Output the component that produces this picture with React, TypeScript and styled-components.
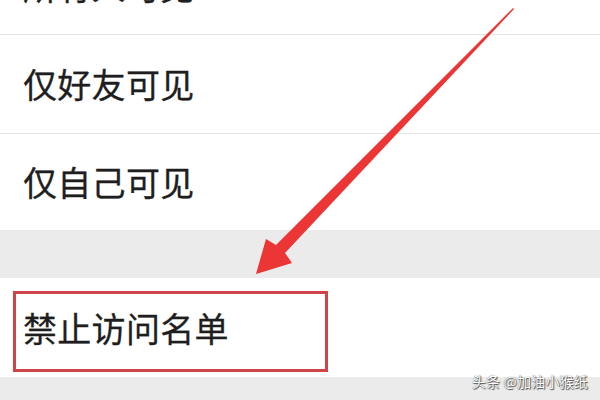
import React from 'react';
import styled, { createGlobalStyle } from 'styled-components';

const GlobalStyle = createGlobalStyle`
  html, body {
    margin: 0;
    padding: 0;
    background: #ffffff;
  }
  * {
    box-sizing: border-box;
  }
`;

const Screen = styled.div`
  position: relative;
  width: 600px;
  height: 400px;
  overflow: hidden;
  background: #ebebeb;
  font-family: "Noto Sans CJK SC", "Noto Sans", sans-serif;
`;

// the first row scrolls partly out of view at the top
const List = styled.div`
  display: flex;
  flex-direction: column;
  margin-top: -62px;
`;

const Row = styled.div<{ $height: number; $divider?: boolean }>`
  position: relative;
  display: flex;
  align-items: center;
  height: ${p => p.$height}px;
  padding-left: 23px;
  background: #ffffff;
  border-bottom: ${p => (p.$divider ? '1px solid #e4e4e4' : 'none')};
`;

const Label = styled.span`
  font-size: 34px;
  line-height: 1;
  color: #1e1e1e;
  letter-spacing: 0.3px;
  -webkit-text-stroke: 0.3px #1e1e1e;
`;

const Gap = styled.div<{ $height: number }>`
  height: ${p => p.$height}px;
  background: #ebebeb;
`;

const Highlight = styled.div`
  position: absolute;
  left: 13px;
  top: 13px;
  width: 315px;
  height: 81px;
  border: 3px solid #cf4446;
`;

const Arrow = styled.svg`
  position: absolute;
  left: 0;
  top: 0;
  width: 600px;
  height: 400px;
  pointer-events: none;
`;

const Watermark = styled.div`
  position: absolute;
  right: 12px;
  bottom: 9px;
  font-size: 14px;
  color: #ffffff;
  letter-spacing: 0.2px;
  text-shadow: 0 0 1px #333, 1px 1px 1px #555;
`;

export default function App() {
  return (
    <>
      <GlobalStyle />
      <Screen>
        <List>
          <Row $height={97} $divider>
            <Label>所有人可见</Label>
          </Row>
          <Row $height={99} $divider>
            <Label>仅好友可见</Label>
          </Row>
          <Row $height={96}>
            <Label>仅自己可见</Label>
          </Row>
          <Gap $height={48} />
          <Row $height={99}>
            <Label>禁止访问名单</Label>
            <Highlight />
          </Row>
        </List>
        <Arrow viewBox="0 0 600 400">
          <defs>
            <filter id="soft" x="-10%" y="-10%" width="120%" height="120%">
              <feGaussianBlur stdDeviation="0.6" />
            </filter>
          </defs>
          <polygon
            filter="url(#soft)"
            fill="#ec3434"
            points="513,8 514,9 285,253 292,263 256,274 266,239 276,245"
          />
        </Arrow>
        <Watermark>头条 @加油小猴纸</Watermark>
      </Screen>
    </>
  );
}
